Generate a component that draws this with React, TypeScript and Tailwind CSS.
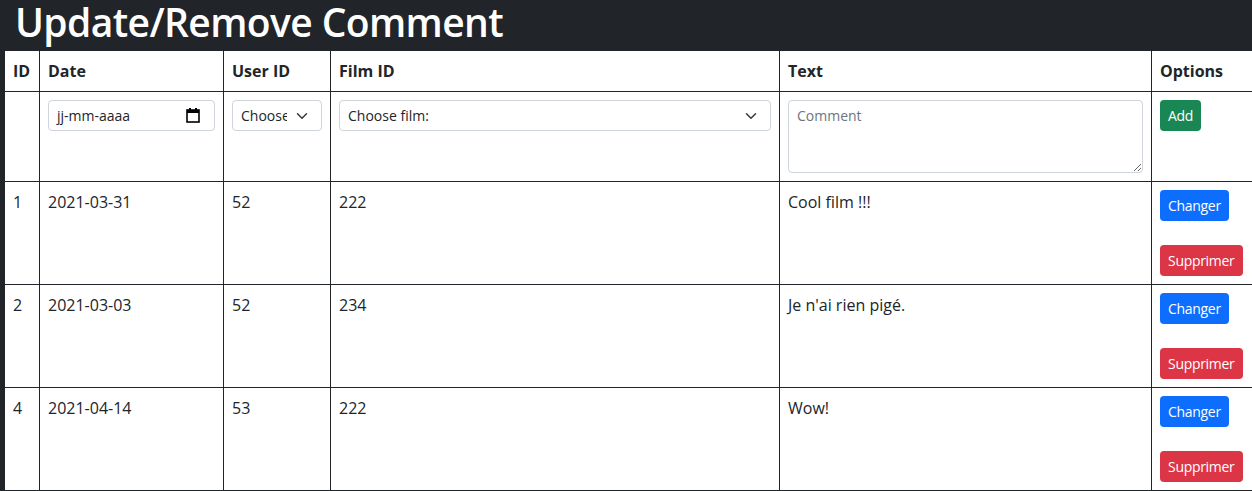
import React from "react";

const font = { fontFamily: '"Open Sans", "Noto Sans", "Liberation Sans", sans-serif' };

function Chevron() {
  return (
    <svg width="16" height="12" viewBox="0 0 16 16" className="pointer-events-none absolute right-[12px] top-1/2 -translate-y-1/2">
      <path fill="none" stroke="#343a40" strokeLinecap="round" strokeLinejoin="round" strokeWidth="2" d="m2 5 6 6 6-6" />
    </svg>
  );
}

function CalendarIcon() {
  return (
    <svg width="14" height="15" viewBox="0 0 14 15" className="absolute right-[14px] top-[7px]">
      <rect x="3" y="0" width="2" height="3" fill="#000" />
      <rect x="9" y="0" width="2" height="3" fill="#000" />
      <rect x="1" y="2" width="12" height="12" fill="none" stroke="#000" strokeWidth="1.6" />
      <rect x="1" y="2" width="12" height="3" fill="#000" />
    </svg>
  );
}

const rows = [
  { id: 1, date: "2021-03-31", user: 52, film: 222, text: "Cool film !!!" },
  { id: 2, date: "2021-03-03", user: 52, film: 234, text: "Je n'ai rien pigé." },
  { id: 4, date: "2021-04-14", user: 53, film: 222, text: "Wow!" },
];

export default function App() {
  const cell = "border border-[#212529] p-[8px] align-top text-left";
  const btn = "h-[31px] rounded-[4px] px-[8px] text-[14px] tracking-[-0.3px] text-white";
  return (
    <div className="min-h-[491px] w-[1252px] overflow-hidden bg-[#212529] text-[#212529]" style={font}>
      <h1 className="h-[50px] pl-[15px] text-[39px] font-semibold leading-[44px] tracking-[-0.6px] text-white">Update/Remove Comment</h1>
      <div className="pl-[4px]">
        <table className="w-[1248px] table-fixed border-collapse bg-white text-[16px] leading-[24px]">
          <colgroup>
            <col className="w-[35px]" />
            <col className="w-[184px]" />
            <col className="w-[107px]" />
            <col className="w-[449px]" />
            <col className="w-[372px]" />
            <col className="w-[101px]" />
          </colgroup>
          <thead>
            <tr className="h-[41px]">
              <th className={cell + " font-bold"}>ID</th>
              <th className={cell + " font-bold"}>Date</th>
              <th className={cell + " font-bold"}>User ID</th>
              <th className={cell + " font-bold"}>Film ID</th>
              <th className={cell + " font-bold"}>Text</th>
              <th className={cell + " font-bold"}>Options</th>
            </tr>
          </thead>
          <tbody>
            <tr className="h-[90px]">
              <td className={cell}></td>
              <td className={cell}>
                <div className="relative h-[31px] w-full rounded-[4px] border border-[#ced4da] px-[8px] text-[14px] leading-[29px]">
                  jj-mm-aaaa
                  <CalendarIcon />
                </div>
              </td>
              <td className={cell}>
                <div className="relative h-[31px] w-full">
                  <select className="h-[31px] w-full appearance-none overflow-hidden rounded-[4px] border border-[#ced4da] bg-white pl-[8px] pr-[34px] text-[14px] text-[#212529]" style={font}>
                    <option>Choose user:</option>
                  </select>
                  <Chevron />
                </div>
              </td>
              <td className={cell}>
                <div className="relative h-[31px] w-full">
                  <select className="h-[31px] w-full appearance-none rounded-[4px] border border-[#ced4da] bg-white pl-[8px] pr-[32px] text-[14px] text-[#212529]" style={font}>
                    <option>Choose film:</option>
                  </select>
                  <Chevron />
                </div>
              </td>
              <td className={cell}>
                <textarea
                  rows={3}
                  placeholder="Comment"
                  className="block h-[73px] w-full rounded-[4px] border border-[#ced4da] px-[8px] py-[4px] text-[14px] leading-[21px] placeholder:text-[#6c757d]"
                  style={font}
                />
              </td>
              <td className={cell}>
                <button className={btn + " bg-[#198754]"} style={font}>Add</button>
              </td>
            </tr>
            {rows.map((r) => (
              <tr key={r.id} className="h-[103px]">
                <td className={cell}>{r.id}</td>
                <td className={cell}>{r.date}</td>
                <td className={cell}>{r.user}</td>
                <td className={cell}>{r.film}</td>
                <td className={cell}>{r.text}</td>
                <td className={cell}>
                  <div className="flex flex-col items-start gap-[24px]">
                    <button className={btn + " bg-[#0d6efd]"} style={font}>Changer</button>
                    <button className={btn + " bg-[#dc3545]"} style={font}>Supprimer</button>
                  </div>
                </td>
              </tr>
            ))}
          </tbody>
        </table>
      </div>
    </div>
  );
}
